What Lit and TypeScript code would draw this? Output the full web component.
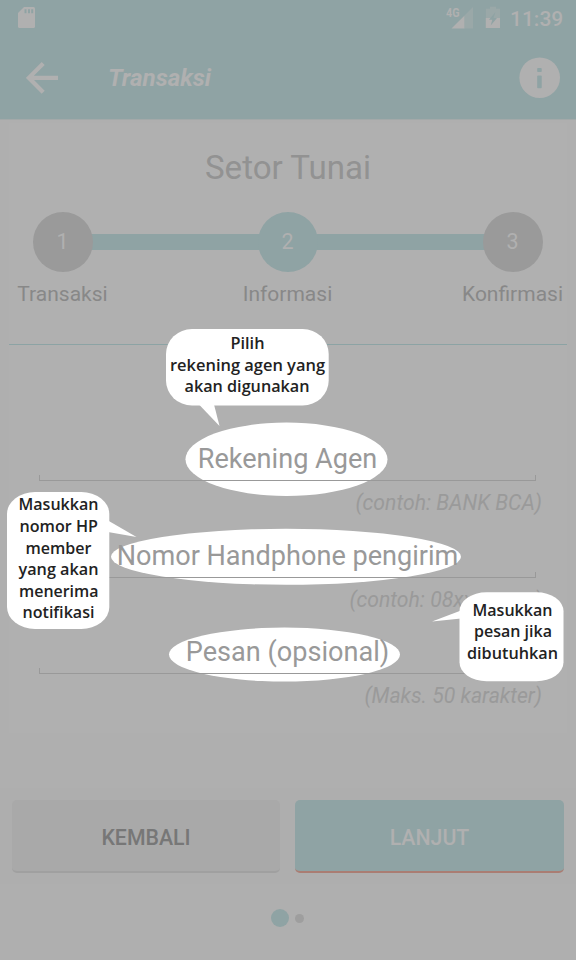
import { LitElement, html, css, svg } from "lit";
import { customElement, property } from "lit/decorators.js";

@customElement("status-header")
class StatusHeader extends LitElement {
  static styles = css`
    :host { display: flex; flex-direction: column; height: 119px; background: #8fa3a4; color: #b0b0b0; border-bottom: 1px solid #a3a9a9; }
    .status { display: flex; align-items: center; height: 36px; padding: 0 13px 0 17px; }
    .grow { flex: 1; }
    .signal { margin-right: 11px; overflow: visible; }
    .battery { margin-right: 9.500px; }
    .four { font: 700 13px Roboto, sans-serif; fill: #b0b0b0; }
    .time { font: 500 21px/24px Roboto, sans-serif; width: 53px; white-space: nowrap; margin-top: 2px; }
    .bar { flex: 1; display: flex; align-items: center; padding: 0 15.500px 0 26px; }
    .title { flex: 1; margin: 1px 0 0 50px; font: italic 700 24.200px/30px Roboto, sans-serif; }
    svg { display: block; }
  `;
  render() {
    return html`
      <div class="status">
        <svg width="20" height="24" viewBox="0 0 20 24"><path fill="#b0b0b0" d="M7 1H16.5Q18 1 18 2.500V20.500Q18 22 16.500 22H2.500Q1 22 1 20.500V7Z"/><path fill="#8fa3a4" d="M7.500 3.200h2v4h-2zM11 3.200h2v4h-2zM14.200 3.200h2v4h-2z"/></svg>
        <span class="grow"></span>
        <svg class="signal" width="29" height="24" viewBox="0 0 29 24"><path fill="#9aa8a8" d="M28 1V22.500H19V10Z"/><path fill="#b0b0b0" d="M19.300 9.800V22.500H6.500Z"/><text class="four" x="1" y="10.800" textLength="13.500" lengthAdjust="spacingAndGlyphs">4G</text></svg>
        <svg class="battery" width="16" height="24" viewBox="0 0 16 24"><path fill="#9aa8a8" d="M5 .8h6v2h4V12.500H.8V2.800H5z"/><path fill="#b0b0b0" d="M.8 12h14.200V22H.8z"/><path fill="#8fa3a4" d="M10.500 6 4 13.800h3.300L5.700 19.500 12 11.900H8.500z"/></svg>
        <span class="time">11:39</span>
      </div>
      <div class="bar">
        <svg width="32" height="34" viewBox="0 0 32 34"><path fill="none" stroke="#b0b0b0" stroke-width="4.200" d="M32 16.800H3M17.200 2.400 2.800 16.800 17.200 31.200"/></svg>
        <span class="title">Transaksi</span>
        <svg width="42" height="42" viewBox="0 0 42 42"><circle cx="20.700" cy="20.700" r="20.300" fill="#b0b0b0"/><rect x="18.200" y="11" width="4.500" height="4" rx=".8" fill="#8fa3a4"/><rect x="18.200" y="18.500" width="4.500" height="12.700" rx=".8" fill="#8fa3a4"/></svg>
      </div>`;
  }
}

@customElement("step-progress")
class StepProgress extends LitElement {
  static styles = css`
    :host { display: grid; grid-template-columns: repeat(3, 120px); justify-content: space-between; width: 570px; margin-left: -6.500px; font-family: Roboto, sans-serif; position: relative; }
    .rail { position: absolute; left: 60px; right: 60px; top: 22px; height: 15.5px; background: #8fa3a4; }
    .step { display: flex; flex-direction: column; align-items: center; position: relative; }
    .dot { width: 60px; height: 60px; border-radius: 50%; background: #9a9a9a; color: #b0b0b0; font-size: 21.500px; line-height: 59px; text-align: center; }
    .active { background: #8fa3a4; }
    .label { margin-top: 9px; font-size: 21px; line-height: 26px; height: 25px; color: #888; white-space: nowrap; }
  `;
  render() {
    return html`<div class="rail"></div>${["Transaksi", "Informasi", "Konfirmasi"].map(
      (name, i) => html`<div class="step"><span class="dot ${i === 1 ? "active" : ""}">${i + 1}</span><span class="label">${name}</span></div>`
    )}`;
  }
}

@customElement("form-field")
class FormField extends LitElement {
  @property() label = "";
  @property() hint = "";
  @property({ type: Array }) spot: number[] = [0, 0, 0, 0];
  static styles = css`
    :host { display: block; height: 96.700px; font-family: Roboto, sans-serif; }
    .box { position: relative; height: 44.500px; margin: 0 31px 0 30px; }
    .spot { position: absolute; inset: 0; overflow: visible; }
    .label { position: relative; display: block; text-align: center; font-size: 27.100px; line-height: 45px; height: 38px; color: #999; white-space: nowrap; }
    .line { position: relative; height: 5px; border: solid #999; border-width: 0 1.500px 1.500px; }
    .hint { margin: 8.500px 25px 0 0; text-align: right; font-style: italic; font-size: 21.200px; line-height: 26px; color: #9a9a9a; white-space: nowrap; }
  `;
  render() {
    const [x, y, rx, ry] = this.spot;
    return html`
      <div class="box">
        <svg class="spot" width="1" height="1">${svg`<ellipse cx=${x} cy=${y} rx=${rx} ry=${ry} fill="#fff"/>`}</svg>
        <span class="label">${this.label}</span>
        <div class="line"></div>
      </div>
      <div class="hint">${this.hint}</div>`;
  }
}

type Line = [string, number, number, number];
const lines: Line[] = [
  ["Pilih", 230.5, 348.5, 34],
  ["rekening agen yang", 170, 370.5, 155],
  ["akan digunakan", 184.5, 392, 125],
  ["Masukkan", 18.5, 510, 80],
  ["nomor HP", 19.5, 531.5, 78.5],
  ["member", 25.5, 553.5, 66],
  ["yang akan", 18.5, 575, 80],
  ["menerima", 19, 596.5, 79.5],
  ["notifikasi", 22.5, 617.8, 72],
  ["Masukkan", 472.500, 615.8, 80],
  ["pesan jika", 474, 637.3, 78],
  ["dibutuhkan", 467, 658.8, 91],
];

@customElement("tip-bubbles")
class TipBubbles extends LitElement {
  static styles = css`
    :host { position: absolute; inset: 0; pointer-events: none; }
    svg { display: block; }
    .shape { fill: #fff; }
    .words { font: 600 17px "Open Sans", "Noto Sans", sans-serif; fill: #222; }
  `;
  render() {
    return html`<svg width="576" height="960" viewBox="0 0 576 960">
      <g class="shape">
        <rect x="166" y="329" width="162.700" height="76.500" rx="26" ry="25"/>
        <path d="M199 404.500H214L219.500 426Z"/>
        <rect x="7" y="492" width="102.300" height="137" rx="28" ry="22"/>
        <path d="M108 520.500 136.500 537 108 532Z"/>
        <rect x="459.500" y="592.300" width="104" height="89" rx="27" ry="19"/>
        <path d="M461 610.500 432 621.500 461 618.500Z"/>
      </g>
      <g class="words">${lines.map(
        ([text, x, y, w]) => svg`<text x=${x} y=${y} textLength=${w} lengthAdjust="spacingAndGlyphs">${text}</text>`
      )}</g>
    </svg>`;
  }
}

@customElement("app-root")
class AppRoot extends LitElement {
  static styles = css`
    :host { display: flex; flex-direction: column; position: relative; width: 576px; height: 960px; overflow: hidden; background: #afafaf; font-family: Roboto, sans-serif; }
    .card { height: 610px; margin: 3px 9px 0; background: #b0b0b0; display: flex; flex-direction: column; }
    h1 { margin: 25px 0 24px; font-size: 33.100px; line-height: 40px; font-weight: 400; text-align: center; color: #929292; }
    .rule { margin-top: 38px; height: 1px; flex: none; background: #8ca3a4; }
    .fields { margin-top: 92px; }
    .actions { margin-top: 55px; height: 72px; padding: 12px 12px; background: #aeaeae; display: flex; gap: 15px; }
    .btn { flex: 0 0 268px; box-sizing: border-box; height: 73px; border-radius: 5px; border-bottom: 2.500px solid #a0a0a0; background: #a9a9a9; color: #777; font-size: 21.300px; line-height: 76px; font-weight: 500; text-align: center; }
    .next { flex: 1; background: #8fa3a4; border-bottom-color: #aa7d73; color: #b0b0b0; }
    .pager { display: flex; align-items: center; justify-content: center; gap: 6px; margin-top: 25px; padding-right: 1px; }
    .page { width: 9px; height: 9px; border-radius: 50%; background: #9e9e9e; }
    .current { width: 18px; height: 18px; background: #8fa3a4; }
  `;
  render() {
    return html`
      <status-header></status-header>
      <div class="card">
        <h1>Setor Tunai</h1>
        <step-progress></step-progress>
        <div class="rule"></div>
        <div class="fields">
          <form-field label="Rekening Agen" hint="(contoh: BANK BCA)" .spot=${[247.5, 22.3, 101, 36.7]}></form-field>
          <form-field label="Nomor Handphone pengirim" hint="(contoh: 08xxxxxxxx)" .spot=${[247, 22.8, 175, 28]}></form-field>
          <form-field label="Pesan (opsional)" hint="(Maks. 50 karakter)" .spot=${[245.5, 24.6, 115.5, 27]}></form-field>
        </div>
      </div>
      <div class="actions"><div class="btn">KEMBALI</div><div class="btn next">LANJUT</div></div>
      <div class="pager"><span class="page current"></span><span class="page"></span></div>
      <tip-bubbles></tip-bubbles>`;
  }
}
